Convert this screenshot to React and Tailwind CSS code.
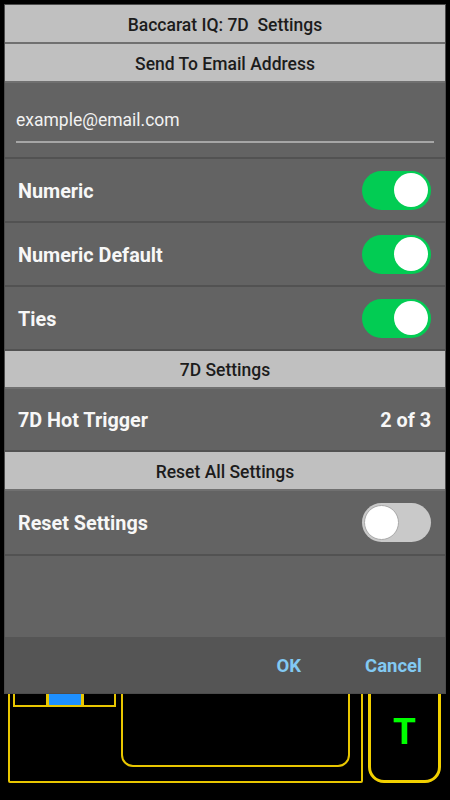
import React from "react";

const FONT = { fontFamily: "Roboto, 'Noto Sans', 'Liberation Sans', sans-serif" };

function Toggle({ on }) {
  return on ? (
    <div className="w-[69px] h-[39px] rounded-full bg-[#02cc53] flex items-center justify-end pr-[3px]">
      <div className="w-[34px] h-[34px] rounded-full bg-white" />
    </div>
  ) : (
    <div className="w-[69px] h-[39px] rounded-full bg-[#c9c9c9] flex items-center justify-start pl-[2px]">
      <div className="w-[35px] h-[35px] rounded-full bg-white border border-[#a9a9a9]" />
    </div>
  );
}

function SectionBar({ children, h = "h-[39px]" }) {
  return (
    <div className={`${h} flex items-center justify-center pt-[3px] bg-[#c0c0c0] border-b-2 border-[#707070] text-[#1c1c1c] text-[17.5px] font-medium`}>
      {children}
    </div>
  );
}

function Row({ label, right, h = "h-[64px]" }) {
  return (
    <div className={`${h} flex items-center justify-between pl-[13px] pr-[14px] border-b-2 border-[#525252]`}>
      <span className="text-[19.8px] font-bold text-[#f7f7f7] pt-[3px]">{label}</span>
      {right}
    </div>
  );
}

export default function App() {
  return (
    <div className="relative w-[450px] h-[800px] bg-black overflow-hidden" style={FONT}>
      {/* game board behind the dialog */}
      <div className="absolute inset-0 flex flex-col justify-end pb-[17px]">
        <div className="flex items-end pl-[8px] gap-[5px]">
          <div className="w-[355px] h-[160px] border-2 border-[#e8c600] rounded-b-[2px] flex items-end pl-[3px] pr-[11px]">
            <div className="w-[103px] h-[70px] mb-[74px] border-2 border-[#e8c600] flex">
              <div className="w-[31px]" />
              <div className="w-[38px] border-x-[3px] border-[#e8c600] bg-[#1e90ff]" />
            </div>
            <div className="ml-auto w-[229px] h-[140px] mb-[14px] border-2 border-[#e8c600] rounded-b-[12px]" />
          </div>
          <div className="w-[73px] h-[160px] border-[3px] border-[#f2d000] rounded-[16px] flex items-end justify-center pb-[30px]">
            <span className="text-[37px] font-bold leading-none text-[#00ff00]">T</span>
          </div>
        </div>
      </div>

      {/* settings dialog */}
      <div className="absolute left-[4px] top-[4px] w-[442px] h-[690px] bg-[#636363] flex flex-col border border-[#4c4c4c]">
        <SectionBar>Baccarat IQ: 7D&nbsp; Settings</SectionBar>
        <SectionBar>Send To Email Address</SectionBar>

        <div className="h-[76px] border-b-2 border-[#525252] px-[11px] pt-[25px]">
          <div className="text-[17.5px] text-[#f2f2f2] leading-[24px] pb-[9px] border-b-2 border-[#a6a6a6]">
            example@email.com
          </div>
        </div>

        <Row label="Numeric" right={<Toggle on />} />
        <Row label="Numeric Default" right={<Toggle on />} />
        <Row label="Ties" right={<Toggle on />} />

        <SectionBar h="h-[38px]">7D Settings</SectionBar>
        <Row label="7D Hot Trigger" h="h-[63px]" right={<span className="text-[19.8px] font-bold text-[#f7f7f7] pt-[3px]">2 of 3</span>} />

        <SectionBar>Reset All Settings</SectionBar>
        <Row label="Reset Settings" h="h-[65px]" right={<Toggle on={false} />} />

        <div className="flex-1" />

        <div className="h-[56px] bg-[#555555] flex items-center justify-end gap-[64px] pr-[23px] pt-[4px]">
          <button className="text-[18.5px] font-bold text-[#82c9f2]">OK</button>
          <button className="text-[18.5px] font-bold text-[#82c9f2]">Cancel</button>
        </div>
      </div>
    </div>
  );
}
